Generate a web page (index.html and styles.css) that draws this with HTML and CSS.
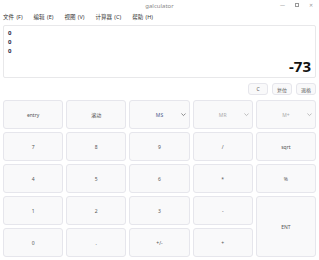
FILE: index.html
```html
<!DOCTYPE html>
<html lang="zh">
<head>
  <meta charset="UTF-8" />
  <title>galculator</title>
  <link rel="stylesheet" href="styles.css">
</head>
<body>
  <!-- Window title -->
  <div class="titlebar">
    <span class="title">galculator</span>
    <div class="controls">
      <span>—</span>
      <span class="max"></span>
      <span>✕</span>
    </div>
  </div>

  <!-- Menu -->
  <div class="menubar">
    <span>文件 (F)</span>
    <span>编辑 (E)</span>
    <span>视图 (V)</span>
    <span>计算器 (C)</span>
    <span>帮助 (H)</span>
  </div>

  <!-- Display -->
  <div class="display">
    <div class="stack">
      <div>0</div>
      <div>0</div>
      <div>0</div>
    </div>
    <div class="value">-73</div>
  </div>

  <div class="actions">
    <button class="small">C</button>
    <button class="small">复位</button>
    <button class="small">退格</button>
  </div>

  <!-- Keypad -->
  <div class="keypad">
    <button>entry</button>
    <button>滚动</button>
    <button class="drop">MS <svg viewBox="0 0 6 4"><path d="M0.5 0.5 L3 3 L5.5 0.5"/></svg></button>
    <button class="drop off">MR <svg viewBox="0 0 6 4"><path d="M0.5 0.5 L3 3 L5.5 0.5"/></svg></button>
    <button class="drop off">M+ <svg viewBox="0 0 6 4"><path d="M0.5 0.5 L3 3 L5.5 0.5"/></svg></button>

    <button>7</button>
    <button>8</button>
    <button>9</button>
    <button>/</button>
    <button>sqrt</button>

    <button>4</button>
    <button>5</button>
    <button>6</button>
    <button>*</button>
    <button>%</button>

    <button>1</button>
    <button>2</button>
    <button>3</button>
    <button>-</button>
    <button class="ent">ENT</button>

    <button>0</button>
    <button>.</button>
    <button>+/-</button>
    <button>+</button>
  </div>
</body>
</html>
```

FILE: styles.css
```css
body {
  margin: 0;
  width: 319px;
  height: 260px;
  background: #fff;
  font-family: "Noto Sans", "Noto Sans CJK SC", sans-serif;
  color: #444;
  overflow: hidden;
}
.titlebar {
  position: relative;
  height: 11px;
  display: flex;
  align-items: center;
  justify-content: center;
  font-size: 6px;
  color: #888;
}
.controls {
  position: absolute;
  right: 6px;
  top: 2px;
  display: flex;
  gap: 10px;
  font-size: 5px;
  color: #999;
}
.controls .max {
  width: 4px;
  height: 4px;
  border: 1px solid #999;
  box-sizing: border-box;
  margin-top: 1px;
}
.menubar {
  height: 12px;
  display: flex;
  align-items: center;
  gap: 11px;
  padding-left: 3px;
  font-size: 5.5px;
  color: #333;
  word-spacing: 1px;
}
.display {
  margin: 2px 3px 0;
  height: 53px;
  box-sizing: border-box;
  border: 1px solid #e8e8ea;
  border-radius: 2px;
  position: relative;
  background: #fff;
}
.stack {
  padding: 3px 0 0 4px;
  font-size: 6px;
  font-weight: bold;
  line-height: 9px;
  color: #1f2a48;
}
.value {
  position: absolute;
  right: 4px;
  bottom: 1px;
  font-size: 15px;
  font-weight: bold;
  color: #111;
}
.actions {
  display: flex;
  justify-content: flex-end;
  gap: 4px;
  margin: 5px 3px 0;
  height: 12px;
}
button {
  font-family: inherit;
  background: #f9f9fa;
  border: 1px solid #e6e6ec;
  border-radius: 3px;
  color: #555;
  font-size: 5px;
  padding: 0;
}
.small {
  width: 20px;
  font-size: 5px;
}
.keypad {
  display: grid;
  grid-template-columns: repeat(5, 1fr);
  grid-auto-rows: 29px;
  gap: 3px;
  margin: 5px 3px 0;
}
.drop {
  position: relative;
  color: #4a5a8a;
}
.drop svg {
  position: absolute;
  right: 3px;
  top: 12px;
  width: 5px;
  height: 3.5px;
  fill: none;
  stroke: #666;
  stroke-width: 0.9;
}
.drop.off {
  color: #aaa;
}
.drop.off svg {
  stroke: #aaa;
}
.ent {
  grid-row: span 2;
}
```
